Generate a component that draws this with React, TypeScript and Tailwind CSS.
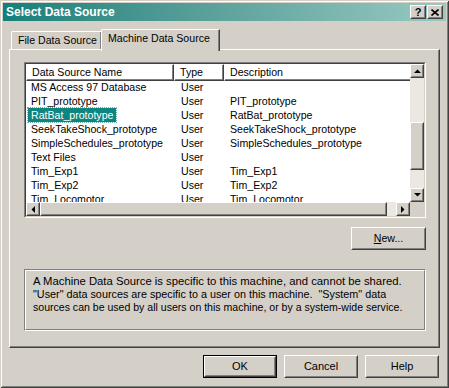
import React from 'react';

const Raised: React.FC<{ className?: string; children?: React.ReactNode }> = ({ className = '', children }) => (
  <div className={`border border-t-white border-l-white border-r-[#404040] border-b-[#404040] bg-[#d4d0c8] ${className}`}>
    <div className="w-full h-full border border-t-[#d4d0c8] border-l-[#d4d0c8] border-r-[#808080] border-b-[#808080] flex items-center justify-center">
      {children}
    </div>
  </div>
);

const Arrow: React.FC<{ dir: 'up' | 'down' | 'left' | 'right' }> = ({ dir }) => {
  const pts = {
    up: '0,4 7,4 3.5,0.5',
    down: '0,0 7,0 3.5,3.5',
    left: '4,0 4,7 0.5,3.5',
    right: '0,0 0,7 3.5,3.5',
  }[dir];
  const vertical = dir === 'up' || dir === 'down';
  return (
    <svg width={vertical ? 7 : 4} height={vertical ? 4 : 7} viewBox={vertical ? '0 0 7 4' : '0 0 4 7'}>
      <polygon points={pts} fill="#000" />
    </svg>
  );
};

const rows = [
  { name: 'MS Access 97 Database', type: 'User', desc: '' },
  { name: 'PIT_prototype', type: 'User', desc: 'PIT_prototype' },
  { name: 'RatBat_prototype', type: 'User', desc: 'RatBat_prototype', selected: true },
  { name: 'SeekTakeShock_prototype', type: 'User', desc: 'SeekTakeShock_prototype' },
  { name: 'SimpleSchedules_prototype', type: 'User', desc: 'SimpleSchedules_prototype' },
  { name: 'Text Files', type: 'User', desc: '' },
  { name: 'Tim_Exp1', type: 'User', desc: 'Tim_Exp1' },
  { name: 'Tim_Exp2', type: 'User', desc: 'Tim_Exp2' },
  { name: 'Tim_Locomotor', type: 'User', desc: 'Tim_Locomotor' },
];

const HeaderCell: React.FC<{ w: string; label: string }> = ({ w, label }) => (
  <div className={`${w} h-[17px] shrink-0 border-t border-l border-t-white border-l-white border-r border-b border-r-[#404040] border-b-[#404040]`}>
    <div className="h-full border-r border-b border-r-[#808080] border-b-[#808080] pl-[5px] flex items-center leading-none">
      {label}
    </div>
  </div>
);

export default function App() {
  return (
    <div className="w-[449px] h-[388px] bg-[#d4d0c8] p-[3px] flex flex-col font-['Liberation_Sans',Arial,sans-serif] text-[10.6px] text-black shadow-[inset_1px_1px_#d4d0c8,inset_-1px_-1px_#404040,inset_2px_2px_#ffffff,inset_-2px_-2px_#808080]">
      {/* title bar */}
      <div className="h-[18px] flex items-center pl-[3px] pr-[3px] bg-linear-to-r from-[#127f7a] to-[#98c9c2]">
        <span className="text-white font-bold text-[12px] flex-1">Select Data Source</span>
        <div className="flex gap-[1px]">
          <Raised className="w-[16px] h-[14px]">
            <span className="font-bold text-[11px] leading-none">?</span>
          </Raised>
          <Raised className="w-[16px] h-[14px]">
            <svg width="8" height="7" viewBox="0 0 8 7">
              <path d="M0.5 0.5 L7.5 6.5 M7.5 0.5 L0.5 6.5" stroke="#000" strokeWidth="1.6" />
            </svg>
          </Raised>
        </div>
      </div>

      {/* tabs */}
      <div className="ml-[6px] mt-[8px] h-[20px] flex items-end relative z-10">
        <div className="ml-[2px] w-[90px] h-[18px] border-t border-l border-t-white border-l-white shadow-[inset_-1px_0_#808080] pl-[6px] pt-[1px] flex items-center rounded-tl-[2px]">
          File Data Source
        </div>
        <div className="w-[119px] h-[22px] -mb-[2px] bg-[#d4d0c8] border-t border-l border-t-white border-l-white border-r border-r-[#404040] shadow-[inset_-1px_0_#808080] pl-[6px] pb-[3px] flex items-center rounded-tl-[2px]">
          Machine Data Source
        </div>
      </div>

      {/* panel */}
      <div className="ml-[6px] w-[431px] h-[299px] border-t border-l border-t-white border-l-white border-r border-b border-r-[#404040] border-b-[#404040]">
        <div className="h-full border-r border-b border-r-[#808080] border-b-[#808080] pl-[14px] pt-[12px] flex flex-col">
          {/* list */}
          <div className="w-[402px] h-[156px] border border-t-[#808080] border-l-[#808080] border-r-white border-b-white">
            <div className="h-full border border-t-[#404040] border-l-[#404040] border-r-[#d4d0c8] border-b-[#d4d0c8] flex flex-col">
              <div className="flex h-[138px]">
                <div className="w-[384px] bg-white overflow-hidden">
                  <div className="flex w-[400px]">
                    <HeaderCell w="w-[148px]" label="Data Source Name" />
                    <HeaderCell w="w-[50px]" label="Type" />
                    <HeaderCell w="w-[202px]" label="Description" />
                  </div>
                  {rows.map((r) => (
                    <div key={r.name} className="flex h-[14px] items-center whitespace-nowrap">
                      <div className="w-[148px] pl-[2px]">
                        <span className={r.selected ? 'bg-[#0d8580] text-white px-[3px] py-[1px] outline outline-dotted outline-[#6fb2ad]' : 'px-[3px]'}>
                          {r.name}
                        </span>
                      </div>
                      <div className="w-[50px] pl-[7px]">{r.type}</div>
                      <div className="pl-[6px]">{r.desc}</div>
                    </div>
                  ))}
                </div>
                {/* vertical scrollbar */}
                <div className="w-[14px] flex flex-col bg-[#ebe8e1]">
                  <Raised className="w-[14px] h-[14px]"><Arrow dir="up" /></Raised>
                  <div className="h-[44px]" />
                  <Raised className="w-[14px] h-[48px]" />
                  <div className="flex-1" />
                  <Raised className="w-[14px] h-[14px]"><Arrow dir="down" /></Raised>
                </div>
              </div>
              {/* horizontal scrollbar */}
              <div className="flex h-[14px]">
                <div className="w-[384px] flex bg-[#ebe8e1]">
                  <Raised className="w-[14px] h-[14px]"><Arrow dir="left" /></Raised>
                  <Raised className="w-[347px] h-[14px]" />
                  <div className="flex-1" />
                  <Raised className="w-[14px] h-[14px]"><Arrow dir="right" /></Raised>
                </div>
                <div className="w-[14px] bg-[#d4d0c8]" />
              </div>
            </div>
          </div>

          {/* new button */}
          <div className="w-[402px] flex justify-end mt-[9px]">
            <Raised className="w-[75px] h-[23px]">
              <span><u>N</u>ew...</span>
            </Raised>
          </div>

          {/* info group */}
          <div className="mt-[19px] w-[402px] h-[62px] border border-t-[#808080] border-l-[#808080] border-r-white border-b-white">
            <div className="h-full border border-t-white border-l-white border-r-[#808080] border-b-[#808080] pl-[7px] pt-[4px] leading-[13px] whitespace-pre">
              <div className="text-[11.3px]">A Machine Data Source is specific to this machine, and cannot be shared.</div>
              <div className="text-[10.8px]">"User" data sources are specific to a user on this machine.  "System" data</div>
              <div className="text-[10.55px]">sources can be used by all users on this machine, or by a system-wide service.</div>
            </div>
          </div>
        </div>
      </div>

      {/* dialog buttons */}
      <div className="ml-[6px] w-[431px] mt-[7px] flex justify-end gap-[7px] pr-[1px] text-[11px]">
        <div className="border border-black">
          <Raised className="w-[72px] h-[21px]">OK</Raised>
        </div>
        <Raised className="w-[74px] h-[23px]">Cancel</Raised>
        <Raised className="w-[74px] h-[23px]">Help</Raised>
      </div>
    </div>
  );
}
